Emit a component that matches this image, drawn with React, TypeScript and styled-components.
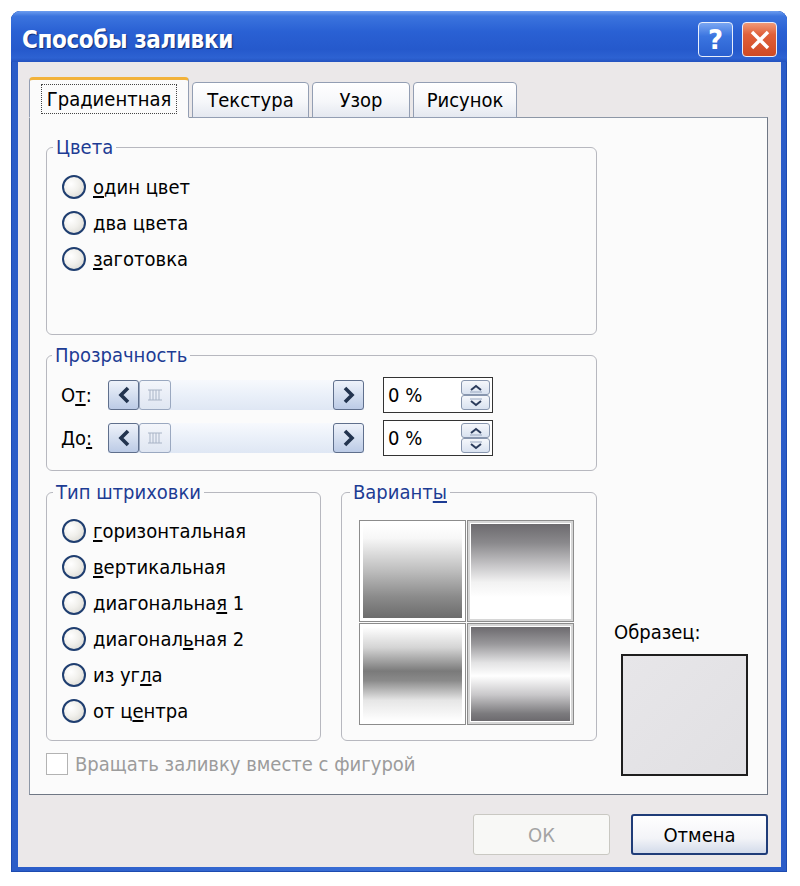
import React from "react";
import styled, { createGlobalStyle } from "styled-components";

const GlobalStyle = createGlobalStyle`
  html, body {
    margin: 0;
    padding: 0;
    background: #ffffff;
  }
  body {
    font-family: Tahoma, "DejaVu Sans Condensed", "DejaVu Sans", sans-serif;
    font-size: 20px;
    color: #000;
  }
`;

const Page = styled.div`
  padding: 11px 0 0 11px;
`;

const Window = styled.div`
  width: 776px;
  height: 861px;
  box-sizing: border-box;
  display: flex;
  flex-direction: column;
  background: linear-gradient(90deg, #2a5cc8 0%, #3a6fd6 50%, #2a5cc8 100%);
  border-radius: 9px 9px 0 0;
  padding: 0 6px 5px 7px;
  box-shadow: inset 0 0 0 1px #1d4bb0;
`;

const TitleBar = styled.div`
  height: 52px;
  margin: 0 -6px 0 -7px;
  padding: 0 10px 0 11px;
  display: flex;
  align-items: center;
  border-radius: 9px 9px 0 0;
  background: linear-gradient(
    180deg,
    #6c9df0 0%,
    #3b74de 10%,
    #2a61d4 40%,
    #2559cc 75%,
    #2d62d2 92%,
    #2352bf 100%
  );
`;

const Title = styled.div`
  flex: 1;
  padding-top: 6px;
  font-family: "DejaVu Sans Condensed", "DejaVu Sans", sans-serif;
  font-weight: bold;
  font-size: 24px;
  color: #fff;
  text-shadow: 1px 1px 1px #0f2f7a;
  letter-spacing: -0.4px;
`;

const CaptionButton = styled.div<{ $close?: boolean }>`
  width: 35px;
  height: 35px;
  margin-top: 6px;
  margin-left: ${(p) => (p.$close ? "9px" : "0")};
  box-sizing: border-box;
  border: 1px solid #e8eefc;
  border-radius: 4px;
  display: flex;
  align-items: center;
  justify-content: center;
  color: #fff;
  font-family: "DejaVu Sans", sans-serif;
  font-weight: bold;
  font-size: 26px;
  background: ${(p) =>
    p.$close
      ? "linear-gradient(180deg, #f09a78 0%, #e0603a 35%, #cf4a24 100%)"
      : "linear-gradient(180deg, #7aa6f2 0%, #3b75e0 40%, #2a60d0 100%)"};
`;

const Client = styled.div`
  flex: 1;
  display: flex;
  flex-direction: column;
  background: #ebe8e9;
  padding: 15px 13px 12px 11px;
`;

const TabStrip = styled.div`
  display: flex;
  align-items: flex-end;
  gap: 3px;
  height: 41px;
  margin-bottom: -1px;
  position: relative;
  z-index: 1;
`;

const Tab = styled.div<{ $active?: boolean; $w: number }>`
  width: ${(p) => p.$w}px;
  box-sizing: border-box;
  height: ${(p) => (p.$active ? 41 : 36)}px;
  display: flex;
  align-items: center;
  justify-content: center;
  border: 1px solid #939eb3;
  border-bottom: ${(p) => (p.$active ? "1px solid #fbfbfb" : "1px solid #939eb3")};
  border-top: ${(p) => (p.$active ? "3px solid #f2b23a" : "1px solid #939eb3")};
  border-radius: 4px 4px 0 0;
  background: ${(p) =>
    p.$active ? "#fbfbfb" : "linear-gradient(180deg, #ffffff 0%, #f6f7fa 55%, #e4e8f0 100%)"};
  padding-top: ${(p) => (p.$active ? "1px" : "0")};
`;

const TabLabel = styled.span<{ $focus?: boolean }>`
  padding: 2px 5px;
  outline: ${(p) => (p.$focus ? "1px dotted #444" : "none")};
`;

const Panel = styled.div`
  height: 678px;
  box-sizing: border-box;
  border: 1px solid #8d97a6;
  border-right-color: #6f7784;
  border-bottom-color: #6f7784;
  background: #fbfbfb;
  padding: 18px 16px 18px 16px;
  display: flex;
`;

const LeftCol = styled.div`
  width: 551px;
  display: flex;
  flex-direction: column;
`;

const Group = styled.fieldset<{ $w: number; $h: number; $pad: string }>`
  width: ${(p) => p.$w}px;
  height: ${(p) => p.$h}px;
  box-sizing: border-box;
  margin: 0;
  padding: ${(p) => p.$pad};
  border: 1px solid #b7b8bf;
  border-radius: 6px;
  min-width: 0;
`;

const Legend = styled.legend`
  margin-left: -9px;
  padding: 0 3px;
  line-height: 22px;
  color: #1d3c94;
  font-size: 20px;
`;

const GroupGap = styled.div<{ $h: number }>`
  height: ${(p) => p.$h}px;
`;

const RadioRow = styled.div`
  display: flex;
  align-items: center;
  height: 36px;
  gap: 7px;
`;

const RadioCircle = styled.span`
  width: 24px;
  height: 24px;
  box-sizing: border-box;
  border-radius: 50%;
  border: 2px solid #1f3e70;
  background: radial-gradient(circle at 35% 35%, #ffffff 0%, #f1f0ec 45%, #d3d2cc 100%);
  flex-shrink: 0;
`;

const Key = styled.span`
  text-decoration: underline;
  text-underline-offset: 2px;
`;

const SliderRow = styled.div`
  display: flex;
  align-items: center;
  height: 36px;
`;

const SliderLabel = styled.div`
  width: 47px;
`;

const Slider = styled.div`
  width: 256px;
  height: 30px;
  display: flex;
  margin-right: 19px;
  background: linear-gradient(180deg, #f7f9fd 0%, #eaf0f9 50%, #dfe7f4 100%);
`;

const ArrowBtn = styled.div`
  width: 31px;
  height: 30px;
  box-sizing: border-box;
  border: 1px solid #5f6f8c;
  border-radius: 3px;
  display: flex;
  align-items: center;
  justify-content: center;
  background: linear-gradient(180deg, #eef2fa 0%, #d5dff0 50%, #bccbe6 100%);
`;

const Thumb = styled.div`
  width: 32px;
  height: 30px;
  box-sizing: border-box;
  border: 1px solid #9aa8c0;
  border-radius: 3px;
  display: flex;
  align-items: center;
  justify-content: center;
  background: linear-gradient(180deg, #f4f6fb 0%, #dfe6f2 100%);
`;

const Track = styled.div`
  flex: 1;
`;

const SpinBox = styled.div`
  width: 110px;
  height: 36px;
  box-sizing: border-box;
  border: 1px solid #333;
  background: #fff;
  display: flex;
  align-items: center;
  padding: 0 2px 0 4px;
`;

const SpinText = styled.div`
  flex: 1;
`;

const SpinButtons = styled.div`
  display: flex;
  flex-direction: column;
  width: 29px;
`;

const SpinHalf = styled.div`
  height: 15px;
  box-sizing: border-box;
  border: 1px solid #8896ae;
  border-radius: 3px;
  display: flex;
  align-items: center;
  justify-content: center;
  background: linear-gradient(180deg, #f5f7fb 0%, #d9e2f0 100%);
`;

const BottomRow = styled.div`
  display: flex;
  gap: 20px;
`;

const TileGrid = styled.div`
  display: grid;
  grid-template-columns: 107px 107px;
  grid-template-rows: 102px 102px;
  gap: 1px;
`;

const Tile = styled.div<{ $fill: string; $sunken?: boolean }>`
  box-sizing: border-box;
  border: 1px solid #8c8c8c;
  padding: 3px;
  background: #fff;
  box-shadow: ${(p) => (p.$sunken ? "inset 0 0 0 2px #d6d6d6" : "none")};
  &::after {
    content: "";
    display: block;
    width: 100%;
    height: 100%;
    background: ${(p) => p.$fill};
  }
`;

const CheckRow = styled.div`
  margin-top: 11px;
  display: flex;
  align-items: center;
  gap: 7px;
  height: 24px;
  color: #9c9c9c;
`;

const CheckBox = styled.span`
  width: 22px;
  height: 22px;
  box-sizing: border-box;
  border: 1px solid #b3b3b3;
  background: #fff;
`;

const SideCol = styled.div`
  flex: 1;
  display: flex;
  flex-direction: column;
  justify-content: flex-end;
  padding-left: 17px;
`;

const SampleLabel = styled.div`
  margin-bottom: 10px;
`;

const SampleBox = styled.div`
  width: 127px;
  height: 122px;
  box-sizing: border-box;
  margin-left: 7px;
  border: 2px solid #1e1e1e;
  background: linear-gradient(135deg, #e7e6e9 0%, #e1e0e3 100%);
`;

const ButtonRow = styled.div`
  display: flex;
  justify-content: flex-end;
  gap: 21px;
  margin-top: 19px;
`;

const DialogButton = styled.div<{ $default?: boolean; $disabled?: boolean }>`
  width: 137px;
  height: 41px;
  box-sizing: border-box;
  display: flex;
  align-items: center;
  justify-content: center;
  border-radius: 3px;
  border: ${(p) => (p.$default ? "2px solid #1f3c78" : "1px solid #c9c8c2")};
  background: ${(p) =>
    p.$disabled
      ? "#f8f8f6"
      : "linear-gradient(180deg, #ffffff 0%, #f3f4f8 60%, #d3dbea 100%)"};
  color: ${(p) => (p.$disabled ? "#a3a3a3" : "#000")};
`;

const Chevron = ({ dir }: { dir: "left" | "right" }) => (
  <svg width="14" height="18" viewBox="0 0 14 18">
    <path
      d={dir === "left" ? "M11 2 L4 9 L11 16" : "M3 2 L10 9 L3 16"}
      fill="none"
      stroke="#23344f"
      strokeWidth="3.6"
      strokeLinejoin="miter"
    />
  </svg>
);

const Grip = () => (
  <svg width="16" height="12" viewBox="0 0 16 12">
    <path d="M1 1 H15 M1 11 H15 M3 1 V11 M6 1 V11 M9 1 V11 M12 1 V11" stroke="#a9b4c6" strokeWidth="1" fill="none" />
  </svg>
);

const SpinArrow = ({ up }: { up?: boolean }) => (
  <svg width="16" height="10" viewBox="0 0 16 10">
    <path
      d={up ? "M3 7 L8 3 L13 7" : "M3 3 L8 7 L13 3"}
      fill="none"
      stroke="#2b3c5c"
      strokeWidth="2"
    />
    <path d={up ? "M2 9 H14" : "M2 1 H14"} stroke="#9aa8c0" strokeWidth="1" />
  </svg>
);

const Radio = ({ children }: { children: React.ReactNode }) => (
  <RadioRow>
    <RadioCircle />
    <span>{children}</span>
  </RadioRow>
);

const TransparencyRow = ({ label }: { label: React.ReactNode }) => (
  <SliderRow>
    <SliderLabel>{label}</SliderLabel>
    <Slider>
      <ArrowBtn>
        <Chevron dir="left" />
      </ArrowBtn>
      <Thumb>
        <Grip />
      </Thumb>
      <Track />
      <ArrowBtn>
        <Chevron dir="right" />
      </ArrowBtn>
    </Slider>
    <SpinBox>
      <SpinText>0 %</SpinText>
      <SpinButtons>
        <SpinHalf>
          <SpinArrow up />
        </SpinHalf>
        <SpinHalf>
          <SpinArrow />
        </SpinHalf>
      </SpinButtons>
    </SpinBox>
  </SliderRow>
);

const tiles = [
  { fill: "linear-gradient(180deg, #ffffff 0%, #f7f7f7 15%, #bdbdbd 50%, #8a8a8a 78%, #6c6c6c 100%)" },
  {
    fill: "linear-gradient(180deg, #6c6a6e 0%, #8a898c 20%, #c9c8ca 45%, #f2f2f2 62%, #ffffff 78%, #ffffff 100%)",
    sunken: true,
  },
  { fill: "linear-gradient(180deg, #ffffff 0%, #d4d4d4 22%, #7a7a7a 47%, #8a8a8a 57%, #e6e6e6 78%, #ffffff 100%)" },
  {
    fill: "linear-gradient(180deg, #6c6a6e 0%, #99989b 18%, #e3e3e4 38%, #ffffff 52%, #c9c8ca 72%, #7c7b7e 92%, #6c6a6e 100%)",
    sunken: true,
  },
];

export default function App() {
  return (
    <Page>
      <GlobalStyle />
      <Window>
        <TitleBar>
          <Title>Способы заливки</Title>
          <CaptionButton>?</CaptionButton>
          <CaptionButton $close>
            <svg width="22" height="22" viewBox="0 0 22 22">
              <path d="M3 3 L19 19 M19 3 L3 19" stroke="#fff" strokeWidth="3.4" />
            </svg>
          </CaptionButton>
        </TitleBar>
        <Client>
          <TabStrip>
            <Tab $active $w={160}>
              <TabLabel $focus>Градиентная</TabLabel>
            </Tab>
            <Tab $w={117}>
              <TabLabel>Текстура</TabLabel>
            </Tab>
            <Tab $w={98}>
              <TabLabel>Узор</TabLabel>
            </Tab>
            <Tab $w={104}>
              <TabLabel>Рисунок</TabLabel>
            </Tab>
          </TabStrip>
          <Panel>
            <LeftCol>
              <Group $w={551} $h={200} $pad="11px 15px">
                <Legend>Цвета</Legend>
                <Radio>
                  <Key>о</Key>дин цвет
                </Radio>
                <Radio>
                  <Key>д</Key>ва цвета
                </Radio>
                <Radio>
                  <Key>з</Key>аготовка
                </Radio>
              </Group>
              <GroupGap $h={9} />
              <Group $w={551} $h={127} $pad="11px 14px">
                <Legend>Прозрачность</Legend>
                <TransparencyRow
                  label={
                    <>
                      О<Key>т</Key>:
                    </>
                  }
                />
                <GroupGap $h={7} />
                <TransparencyRow
                  label={
                    <>
                      До<Key>:</Key>
                    </>
                  }
                />
              </Group>
              <GroupGap $h={10} />
              <BottomRow>
                <Group $w={275} $h={260} $pad="10px 15px">
                  <Legend>Тип штриховки</Legend>
                  <Radio>
                    <Key>г</Key>оризонтальная
                  </Radio>
                  <Radio>
                    <Key>в</Key>ертикальная
                  </Radio>
                  <Radio>
                    диагональна<Key>я</Key> 1
                  </Radio>
                  <Radio>
                    диагонал<Key>ь</Key>ная 2
                  </Radio>
                  <Radio>
                    из уг<Key>л</Key>а
                  </Radio>
                  <Radio>
                    от ц<Key>е</Key>нтра
                  </Radio>
                </Group>
                <Group $w={256} $h={260} $pad="17px 17px">
                  <Legend>
                    Вариант<Key>ы</Key>
                  </Legend>
                  <TileGrid>
                    {tiles.map((t, i) => (
                      <Tile key={i} $fill={t.fill} $sunken={t.sunken} />
                    ))}
                  </TileGrid>
                </Group>
              </BottomRow>
              <CheckRow>
                <CheckBox />
                <span>Вращать заливку вместе с фигурой</span>
              </CheckRow>
            </LeftCol>
            <SideCol>
              <SampleLabel>Образец:</SampleLabel>
              <SampleBox />
            </SideCol>
          </Panel>
          <ButtonRow>
            <DialogButton $disabled>ОК</DialogButton>
            <DialogButton $default>Отмена</DialogButton>
          </ButtonRow>
        </Client>
      </Window>
    </Page>
  );
}
